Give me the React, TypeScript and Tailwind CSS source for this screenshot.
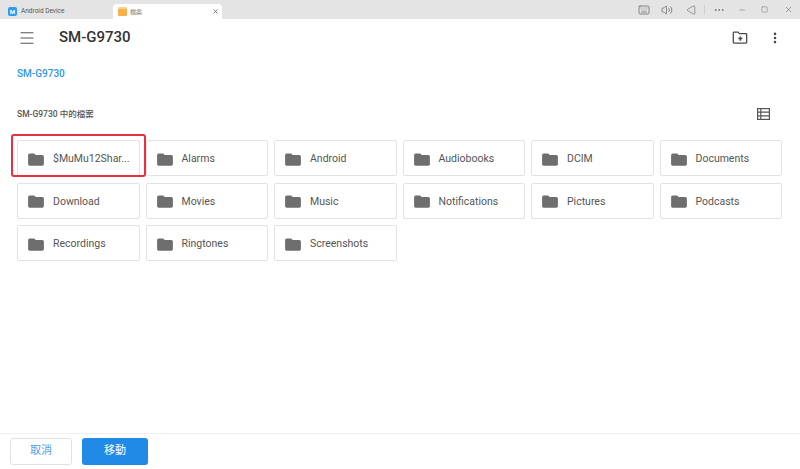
import { X, Minus, Square, MoreHorizontal, Volume2, Triangle, Keyboard, Menu, MoreVertical } from 'lucide-react';

const folders = [
  '$MuMu12Shar...', 'Alarms', 'Android', 'Audiobooks', 'DCIM', 'Documents',
  'Download', 'Movies', 'Music', 'Notifications', 'Pictures', 'Podcasts',
  'Recordings', 'Ringtones', 'Screenshots',
];

function FolderIcon() {
  return (
    <svg width="16" height="13" viewBox="0 0 17 14" className="shrink-0">
      <path d="M1.6 0.5H6.5L8.2 2.2H15.4C16.2 2.2 17 3 17 3.8V12.2C17 13 16.2 13.8 15.4 13.8H1.6C0.8 13.8 0 13 0 12.2V2.1C0 1.3 0.8 0.5 1.6 0.5Z" fill="#6e6e6e" />
    </svg>
  );
}

function NewFolderIcon() {
  return (
    <svg width="16" height="13" viewBox="0 0 16 14" fill="none">
      <path d="M0.8 2V12.2C0.8 12.7 1.2 13.1 1.7 13.1H14.3C14.8 13.1 15.2 12.7 15.2 12.2V3.8C15.2 3.3 14.8 2.9 14.3 2.9H7.4L5.8 1.2H1.7C1.2 1.2 0.8 1.5 0.8 2Z" stroke="#4a4a4a" strokeWidth="1.4" />
      <path d="M8.4 6V10.4M6.2 8.2H10.6" stroke="#4a4a4a" strokeWidth="1.6" />
    </svg>
  );
}

function ListViewIcon() {
  return (
    <svg width="13" height="12" viewBox="0 0 13 12" fill="none">
      <rect x="0.6" y="0.6" width="11.8" height="10.8" stroke="#555" strokeWidth="1.2" />
      <path d="M0.6 4.2H12.4M0.6 7.8H12.4M3.8 0.6V11.4" stroke="#555" strokeWidth="1.2" />
    </svg>
  );
}

export default function App() {
  return (
    <div className="w-[800px] h-[469px] bg-white flex flex-col overflow-hidden font-['Roboto','Noto_Sans_CJK_TC',sans-serif]">
      {/* Title bar */}
      <div className="h-[19px] bg-[#e4e4e4] flex items-end shrink-0">
        <div className="w-[113px] h-[15px] pl-2 flex items-center gap-[4px]">
          <div className="w-[9px] h-[9px] rounded-[2px] bg-[#2f9bf0] flex items-center justify-center text-white text-[6px] font-bold leading-none">M</div>
          <span className="text-[6.5px] text-[#555]">Android Device</span>
        </div>
        <div className="w-[109px] h-[15px] bg-white rounded-t-[4px] flex items-center pl-[5px] pr-[3px]">
          <div className="w-[9px] h-[9px] rounded-[1px] bg-[#f7b04c] border-t-2 border-[#fbd28f]" />
          <span className="ml-[3px] text-[6px] text-[#777]">檔案</span>
          <X className="ml-auto w-[7px] h-[7px] text-[#555]" strokeWidth={2.5} />
        </div>
        <div className="ml-auto h-[19px] flex items-center text-[#666]">
          <div className="w-[19px] flex justify-center"><Keyboard className="w-[12px] h-[12px]" strokeWidth={1.5} /></div>
          <div className="w-[28px] flex justify-center"><Volume2 className="w-[12px] h-[12px]" strokeWidth={1.5} /></div>
          <div className="w-[19px] flex justify-center"><Triangle className="w-[10px] h-[10px] -rotate-90" strokeWidth={1.5} /></div>
          <div className="w-px h-[10px] bg-[#cfcfcf] ml-[4px] mr-px" />
          <div className="w-[25px] flex justify-center"><MoreHorizontal className="w-[12px] h-[12px]" strokeWidth={1.5} /></div>
          <div className="w-[21px] flex justify-center"><Minus className="w-[8px] h-[8px]" strokeWidth={1.5} /></div>
          <div className="w-[25px] flex justify-center"><Square className="w-[7px] h-[7px]" strokeWidth={1.5} /></div>
          <div className="w-[23px] flex justify-center"><X className="w-[9px] h-[9px]" strokeWidth={1.5} /></div>
        </div>
      </div>

      {/* Toolbar */}
      <div className="h-[37px] pl-[18px] pr-[18px] flex items-center shrink-0">
        <Menu className="w-[18px] h-[18px] text-[#555]" strokeWidth={1.5} />
        <h1 className="ml-[23px] text-[15px] font-medium text-[#333] leading-none">SM-G9730</h1>
        <div className="ml-auto mr-[20px] flex"><NewFolderIcon /></div>
        <MoreVertical className="w-[14px] h-[14px] text-[#4a4a4a]" strokeWidth={2.5} />
      </div>

      {/* Breadcrumb */}
      <div className="mt-[11px] pl-[17px] h-[12px] flex items-center text-[10px] font-medium text-[#2f96ee] shrink-0">SM-G9730</div>

      {/* Section header */}
      <div className="mt-[29px] pl-[17px] pr-[30px] h-[12px] flex items-center justify-between shrink-0">
        <span className="text-[8.5px] font-medium text-[#555]">SM-G9730 中的檔案</span>
        <ListViewIcon />
      </div>

      {/* Folder grid */}
      <div className="mt-[20px] ml-[17px] w-[765px] grid grid-cols-6 gap-x-[6px] gap-y-[6.5px] shrink-0">
        {folders.map((name, i) => (
          <div key={name} className="relative h-[36px] rounded-[2px] border border-[#e3e3e3] bg-white pl-[10px] pr-1 pt-[2px] flex items-center">
            <FolderIcon />
            <span className="ml-[9px] text-[10.5px] text-[#555] whitespace-nowrap">{name}</span>
            {i === 0 && (
              <div className="absolute -left-[7px] -top-[7px] w-[135px] h-[43px] rounded-[3px] border-2 border-[#e8303f]" />
            )}
          </div>
        ))}
      </div>

      {/* Footer */}
      <div className="mt-auto h-[36px] border-t border-[#f0f0f0] pl-[10px] pt-[4px] flex gap-[10px] shrink-0">
        <button className="w-[62px] h-[27px] rounded-[3px] border border-[#e2e2e2] bg-white text-[11px] text-[#4a9eea]">取消</button>
        <button className="w-[66px] h-[27px] rounded-[3px] bg-[#2189e6] text-[11px] text-white">移動</button>
      </div>
    </div>
  );
}
